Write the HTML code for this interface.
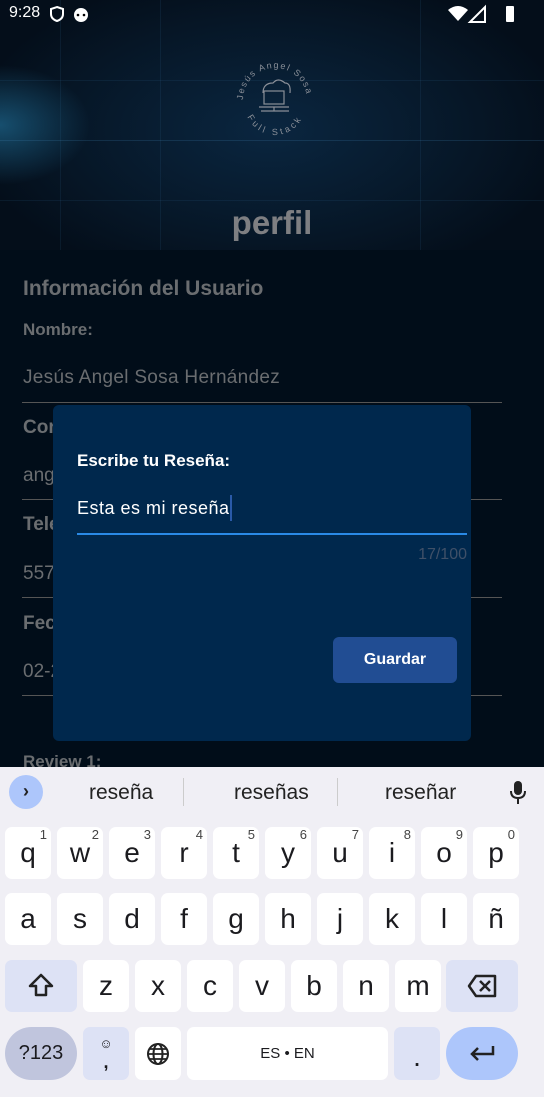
<!DOCTYPE html>
<html><head><meta charset="utf-8">
<style>
*{margin:0;padding:0;box-sizing:border-box}
body{width:544px;height:1119px;overflow:hidden;font-family:"Liberation Sans",sans-serif;background:#010d19;position:relative}
.abs{position:absolute}
.hero{left:0;top:0;width:544px;height:250px;background:
radial-gradient(ellipse 90px 60px at 0px 125px,rgba(40,140,190,.5),transparent),
radial-gradient(ellipse 300px 160px at 270px 130px,#0a2640,#061626 70%,#040e1a);overflow:hidden}
.hero .ln{position:absolute;background:rgba(60,120,170,.12)}
.content{left:0;top:250px;width:544px;height:517px;background:#010d19}
.g{color:#6a6d70}
.dlg{left:53px;top:405px;width:418px;height:336px;background:#00284d;border-radius:6px}
.kb{left:0;top:767px;width:544px;height:330px;background:#f0eff5}
.key{position:absolute;width:46px;height:52px;background:#fff;border-radius:7px;color:#1b1b1f;font-size:28px;text-align:center;line-height:52px;font-family:"Liberation Sans",sans-serif}
.key sup{position:absolute;right:4px;top:-18px;font-size:13px;color:#444}
.sug{position:absolute;top:10px;font-size:21px;color:#222}
</style></head><body>
<div class="abs hero">
 <div class="ln" style="left:0;top:80px;width:544px;height:1px"></div>
 <div class="ln" style="left:0;top:140px;width:544px;height:1px;background:rgba(70,140,190,.2)"></div>
 <div class="ln" style="left:60px;top:0;width:1px;height:250px"></div>
 <div class="ln" style="left:160px;top:0;width:1px;height:250px"></div>
 <div class="ln" style="left:420px;top:0;width:1px;height:250px"></div>
 <div class="ln" style="left:0;top:200px;width:544px;height:1px"></div>
</div>
<div class="abs" style="left:9px;top:4px;color:#fff;font-size:16px">9:28</div>
<svg class="abs" style="left:50px;top:4px" width="50" height="20"><path d="M7 3l6 2v5c0 4-3 6-6 7-3-1-6-3-6-7V5z" fill="none" stroke="#fff" stroke-width="2"/><circle cx="31" cy="11" r="7" fill="#fff"/><circle cx="28" cy="11" r="1.3" fill="#000"/><circle cx="34" cy="11" r="1.3" fill="#000"/></svg>
<svg class="abs" style="left:445px;top:2px" width="80" height="22"><path d="M3 8q10-8 20 0l-10 11z" fill="#fff"/><path d="M40 5v15h-15z" fill="none" stroke="#fff" stroke-width="2"/><rect x="61" y="4" width="8" height="16" rx="1" fill="#fff"/></svg>
<svg class="abs" style="left:225px;top:55px" width="100" height="90" viewBox="0 0 100 90">
 <defs><path id="a1" d="M18 45a32 32 0 0 1 64 0"/><path id="a2" d="M20 50a30 30 0 0 0 60 0"/></defs>
 <text font-size="9" fill="#8a8f98" letter-spacing="1.5"><textPath href="#a1">Jesús Angel Sosa</textPath></text>
 <text font-size="9" fill="#8a8f98" letter-spacing="3"><textPath href="#a2" startOffset="12">Full Stack</textPath></text>
 <path d="M38 38q0-10 10-10q5-6 12 0q6 0 5 10" fill="none" stroke="#8a8f98" stroke-width="1.2"/>
 <rect x="39" y="36" width="20" height="13" fill="none" stroke="#8a8f98" stroke-width="1.2"/>
 <path d="M34 52h30M49 52v4M36 56h28" stroke="#8a8f98" stroke-width="1.2"/>
</svg>
<div class="abs" style="left:0;top:204px;width:544px;text-align:center;font-size:33px;font-weight:bold;color:#7e7f82">perfil</div>
<div class="abs content"></div>
<div class="abs g" style="left:23px;top:277px;font-size:21px;font-weight:bold">Información del Usuario</div>
<div class="abs g" style="left:23px;top:320px;font-size:17px;font-weight:bold">Nombre:</div>
<div class="abs g" style="left:23px;top:367px;font-size:19px;letter-spacing:.3px">Jesús Angel Sosa Hernández</div>
<div class="abs" style="left:22px;top:402px;width:480px;height:1px;background:#555"></div>
<div class="abs g" style="left:23px;top:417px;font-size:19px;font-weight:bold">Cor</div>
<div class="abs g" style="left:23px;top:465px;font-size:19px">ang</div>
<div class="abs" style="left:22px;top:499px;width:480px;height:1px;background:#555"></div>
<div class="abs g" style="left:23px;top:514px;font-size:19px;font-weight:bold">Telé</div>
<div class="abs g" style="left:23px;top:563px;font-size:19px">557</div>
<div class="abs" style="left:22px;top:597px;width:480px;height:1px;background:#555"></div>
<div class="abs g" style="left:23px;top:613px;font-size:19px;font-weight:bold">Fecl</div>
<div class="abs g" style="left:23px;top:661px;font-size:19px">02-2</div>
<div class="abs" style="left:22px;top:695px;width:480px;height:1px;background:#555"></div>
<div class="abs g" style="left:23px;top:752px;font-size:17px;font-weight:bold">Review 1:</div>
<div class="abs dlg"></div>
<div class="abs" style="left:77px;top:451px;color:#fff;font-size:17px;font-weight:bold">Escribe tu Reseña:</div>
<div class="abs" style="left:77px;top:498px;color:#fff;font-size:18px;letter-spacing:.5px">Esta es mi reseña</div>
<div class="abs" style="left:230px;top:495px;width:2px;height:26px;background:#2a5aa8"></div>
<div class="abs" style="left:77px;top:533px;width:390px;height:2px;background:#2a8ae6"></div>
<div class="abs" style="left:380px;top:546px;width:87px;text-align:right;color:#3f5068;font-size:16px">17/100</div>
<div class="abs" style="left:333px;top:637px;width:124px;height:46px;background:#214d93;border-radius:6px;color:#fff;font-size:16px;font-weight:bold;text-align:center;line-height:46px">Guardar</div>
<div class="abs kb"></div>
<div class="abs" style="left:9px;top:775px;width:34px;height:34px;border-radius:50%;background:#adc6fb;text-align:center;line-height:33px;font-size:18px;color:#222;font-weight:bold">›</div>
<div class="sug" style="left:89px;top:781px">reseña</div>
<div class="abs" style="left:183px;top:778px;width:1px;height:28px;background:#ccc"></div>
<div class="sug" style="left:234px;top:781px">reseñas</div>
<div class="abs" style="left:337px;top:778px;width:1px;height:28px;background:#ccc"></div>
<div class="sug" style="left:385px;top:781px">reseñar</div>
<svg class="abs" style="left:508px;top:780px" width="20" height="26"><rect x="6" y="1" width="8" height="14" rx="4" fill="#222"/><path d="M3 11q0 7 7 7q7 0 7-7M10 18v6" fill="none" stroke="#222" stroke-width="2"/></svg>
<div class="key" style="left:5px;top:827px">q<sup>1</sup></div>
<div class="key" style="left:57px;top:827px">w<sup>2</sup></div>
<div class="key" style="left:109px;top:827px">e<sup>3</sup></div>
<div class="key" style="left:161px;top:827px">r<sup>4</sup></div>
<div class="key" style="left:213px;top:827px">t<sup>5</sup></div>
<div class="key" style="left:265px;top:827px">y<sup>6</sup></div>
<div class="key" style="left:317px;top:827px">u<sup>7</sup></div>
<div class="key" style="left:369px;top:827px">i<sup>8</sup></div>
<div class="key" style="left:421px;top:827px">o<sup>9</sup></div>
<div class="key" style="left:473px;top:827px">p<sup>0</sup></div>
<div class="key" style="left:5px;top:893px">a</div>
<div class="key" style="left:57px;top:893px">s</div>
<div class="key" style="left:109px;top:893px">d</div>
<div class="key" style="left:161px;top:893px">f</div>
<div class="key" style="left:213px;top:893px">g</div>
<div class="key" style="left:265px;top:893px">h</div>
<div class="key" style="left:317px;top:893px">j</div>
<div class="key" style="left:369px;top:893px">k</div>
<div class="key" style="left:421px;top:893px">l</div>
<div class="key" style="left:473px;top:893px">ñ</div>
<div class="key" style="left:5px;top:960px;width:72px;background:#dde2f5"><svg width="30" height="30" style="margin-top:11px"><path d="M15 4l11 11h-6v9h-10v-9h-6z" fill="none" stroke="#222" stroke-width="2.5" stroke-linejoin="round"/></svg></div>
<div class="key" style="left:83px;top:960px">z</div>
<div class="key" style="left:135px;top:960px">x</div>
<div class="key" style="left:187px;top:960px">c</div>
<div class="key" style="left:239px;top:960px">v</div>
<div class="key" style="left:291px;top:960px">b</div>
<div class="key" style="left:343px;top:960px">n</div>
<div class="key" style="left:395px;top:960px">m</div>
<div class="key" style="left:446px;top:960px;width:72px;background:#dde2f5"><svg width="30" height="24" style="margin-top:14px"><path d="M9 2h19v20h-19l-7-10z" fill="none" stroke="#222" stroke-width="2.5" stroke-linejoin="round"/><path d="M13 7l10 10M23 7l-10 10" stroke="#222" stroke-width="2.5"/></svg></div>
<div class="key" style="left:5px;top:1027px;width:72px;height:53px;border-radius:27px;background:#c0c5dd;font-size:20px;line-height:53px">?123</div>
<div class="key" style="left:83px;top:1027px;height:53px;background:#dde2f5;font-size:13px;line-height:18px;padding-top:8px">☺<br><b style="font-size:18px">,</b></div>
<div class="key" style="left:135px;top:1027px;height:53px"><svg width="24" height="24" style="margin-top:15px" viewBox="0 0 24 24"><circle cx="12" cy="12" r="10" fill="none" stroke="#222" stroke-width="2"/><ellipse cx="12" cy="12" rx="4.5" ry="10" fill="none" stroke="#222" stroke-width="2"/><path d="M2 12h20M4 7h16M4 17h16" stroke="#222" stroke-width="1.8"/></svg></div>
<div class="key" style="left:187px;top:1027px;width:201px;height:53px;font-size:15px;line-height:53px">ES • EN</div>
<div class="key" style="left:394px;top:1027px;height:53px;background:#dde2f5;line-height:60px">.</div>
<div class="key" style="left:446px;top:1027px;width:72px;height:53px;border-radius:27px;background:#adc6fb"><svg width="30" height="20" style="margin-top:17px"><path d="M26 2v8h-21M11 4l-6 6 6 6" fill="none" stroke="#222" stroke-width="2.5"/></svg></div>
<div class="abs" style="left:0;top:1097px;width:544px;height:22px;background:#fff"></div>
</body></html>
